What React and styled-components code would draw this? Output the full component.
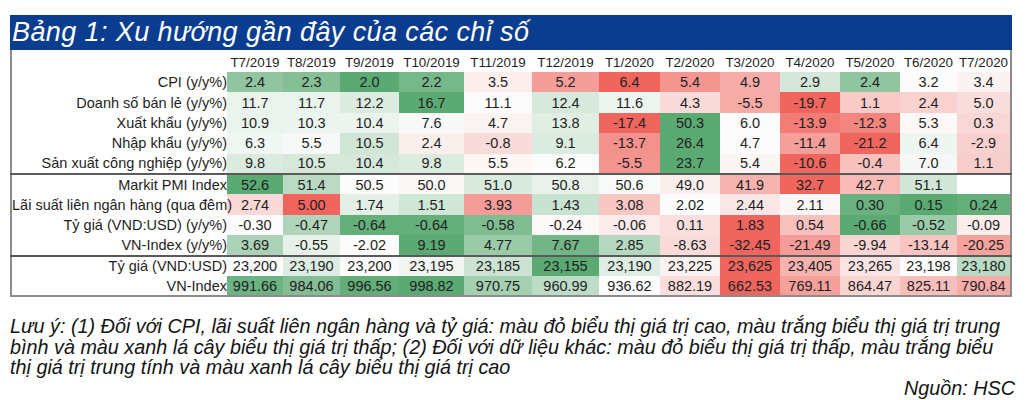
import React from "react";
import styled, { createGlobalStyle } from "styled-components";

const GlobalStyle = createGlobalStyle`
  body {
    margin: 0;
    background: #ffffff;
    font-family: "Liberation Sans", Arial, sans-serif;
    color: #1e1e1e;
  }
`;

const Page = styled.div`
  width: 1032px;
  height: 400px;
  padding: 15px 0 0 10px;
  box-sizing: border-box;
  overflow: hidden;
`;

const Frame = styled.div`
  width: 1002px;
`;

const TitleBar = styled.div`
  height: 35px;
  background: #0a3d8f;
  color: #ffffff;
  display: flex;
  align-items: center;
  padding-left: 2px;
  font-style: italic;
  font-size: 27px;
  letter-spacing: 0.4px;
`;

const Table = styled.table`
  width: 100%;
  border-collapse: collapse;
  table-layout: fixed;
  border-left: 2px solid #8c8c8c;
  border-right: 2px solid #8c8c8c;
  border-bottom: 2px solid #8c8c8c;
  font-size: 14.5px;
`;

const Row = styled.tr`
  height: 20.4px;
  border-bottom: ${(p) => (p.$divider ? "2px solid #5a5a5a" : "none")};
`;

const HeadRow = styled.tr`
  height: 22px;
`;

const HeadCell = styled.th`
  font-weight: normal;
  font-size: 13.4px;
  text-align: center;
  padding: 3px 0 0;
  white-space: nowrap;
`;

const Label = styled.td`
  text-align: right;
  padding: 0;
  white-space: nowrap;
`;

const Value = styled.td`
  text-align: center;
  padding: 0;
  white-space: nowrap;
`;

const Notes = styled.div`
  margin-top: 19px;
  padding-right: 17px;
  font-style: italic;
  font-size: 19.8px;
  line-height: 20.5px;
  color: #141414;
`;

const Source = styled.div`
  text-align: right;
`;

const months = [
  "T7/2019", "T8/2019", "T9/2019", "T10/2019", "T11/2019", "T12/2019",
  "T1/2020", "T2/2020", "T3/2020", "T4/2020", "T5/2020", "T6/2020", "T7/2020",
];

const widths = [56, 57, 59, 65, 68, 67, 61, 60, 60, 60, 60, 57, 54];

const rows = [
  { label: "CPI (y/y%)", dec: 1, inv: true, v: [2.4, 2.3, 2.0, 2.2, 3.5, 5.2, 6.4, 5.4, 4.9, 2.9, 2.4, 3.2, 3.4] },
  { label: "Doanh số bán lẻ (y/y%)", dec: 1, v: [11.7, 11.7, 12.2, 16.7, 11.1, 12.4, 11.6, 4.3, -5.5, -19.7, 1.1, 2.4, 5.0] },
  { label: "Xuất khẩu (y/y%)", dec: 1, v: [10.9, 10.3, 10.4, 7.6, 4.7, 13.8, -17.4, 50.3, 6.0, -13.9, -12.3, 5.3, 0.3] },
  { label: "Nhập khẩu (y/y%)", dec: 1, v: [6.3, 5.5, 10.5, 2.4, -0.8, 9.1, -13.7, 26.4, 4.7, -11.4, -21.2, 6.4, -2.9] },
  { label: "Sản xuất công nghiệp (y/y%)", dec: 1, divider: true, v: [9.8, 10.5, 10.4, 9.8, 5.5, 6.2, -5.5, 23.7, 5.4, -10.6, -0.4, 7.0, 1.1] },
  { label: "Markit PMI Index", dec: 1, v: [52.6, 51.4, 50.5, 50.0, 51.0, 50.8, 50.6, 49.0, 41.9, 32.7, 42.7, 51.1, null] },
  { label: "Lãi suất liên ngân hàng (qua đêm)", dec: 2, inv: true, v: [2.74, 5.0, 1.74, 1.51, 3.93, 1.43, 3.08, 2.02, 2.44, 2.11, 0.3, 0.15, 0.24] },
  { label: "Tỷ giá (VND:USD) (y/y%)", dec: 2, inv: true, v: [-0.3, -0.47, -0.64, -0.64, -0.58, -0.24, -0.06, 0.11, 1.83, 0.54, -0.66, -0.52, -0.09] },
  { label: "VN-Index (y/y%)", dec: 2, divider: true, v: [3.69, -0.55, -2.02, 9.19, 4.77, 7.67, 2.85, -8.63, -32.45, -21.49, -9.94, -13.14, -20.25] },
  { label: "Tỷ giá (VND:USD)", comma: true, inv: true, v: [23200, 23190, 23200, 23195, 23185, 23155, 23190, 23225, 23625, 23405, 23265, 23198, 23180] },
  { label: "VN-Index", dec: 2, v: [991.66, 984.06, 996.56, 998.82, 970.75, 960.99, 936.62, 882.19, 662.53, 769.11, 864.47, 825.11, 790.84] },
];

const RED = [240, 102, 94];
const WHITE = [252, 252, 252];
const GREEN = [92, 170, 115];

const mix = (a, b, t) =>
  `rgb(${a.map((c, i) => Math.round(c + (b[i] - c) * t)).join(",")})`;

// excel-like 3 colour scale: min / 50th percentile / max
const scale = (values, inv) => {
  const nums = values.filter((x) => x !== null).sort((a, b) => a - b);
  const min = nums[0];
  const max = nums[nums.length - 1];
  const pos = (nums.length - 1) / 2;
  const lo = Math.floor(pos);
  const mid = nums[lo] + (nums[Math.ceil(pos)] - nums[lo]) * (pos - lo);
  const low = inv ? GREEN : RED;
  const high = inv ? RED : GREEN;
  return (x) => {
    if (x === null) return "transparent";
    if (x <= mid) return mix(low, WHITE, mid === min ? 1 : (x - min) / (mid - min));
    return mix(WHITE, high, max === mid ? 0 : (x - mid) / (max - mid));
  };
};

const fmt = (x, row) => {
  if (x === null) return "";
  if (row.comma) return x.toLocaleString("en-US");
  return x.toFixed(row.dec);
};

export default function App() {
  return (
    <Page>
      <GlobalStyle />
      <Frame>
        <TitleBar>Bảng 1: Xu hướng gần đây của các chỉ số</TitleBar>
        <Table>
          <colgroup>
            <col style={{ width: 216 }} />
            {widths.map((w, i) => (
              <col key={i} style={{ width: w }} />
            ))}
          </colgroup>
          <thead>
            <HeadRow>
              <HeadCell />
              {months.map((m) => (
                <HeadCell key={m}>{m}</HeadCell>
              ))}
            </HeadRow>
          </thead>
          <tbody>
            {rows.map((row) => {
              const color = scale(row.v, row.inv);
              return (
                <Row key={row.label} $divider={row.divider}>
                  <Label>{row.label}</Label>
                  {row.v.map((x, i) => (
                    <Value key={i} style={{ background: color(x) }}>
                      {fmt(x, row)}
                    </Value>
                  ))}
                </Row>
              );
            })}
          </tbody>
        </Table>
      </Frame>
      <Notes>
        Lưu ý: (1) Đối với CPI, lãi suất liên ngân hàng và tỷ giá: màu đỏ biểu thị giá trị cao, màu trắng biểu thị giá trị trung
        <br />
        bình và màu xanh lá cây biểu thị giá trị thấp; (2) Đối với dữ liệu khác: màu đỏ biểu thị giá trị thấp, màu trắng biểu
        <br />
        thị giá trị trung tính và màu xanh lá cây biểu thị giá trị cao
        <Source>Nguồn: HSC</Source>
      </Notes>
    </Page>
  );
}
